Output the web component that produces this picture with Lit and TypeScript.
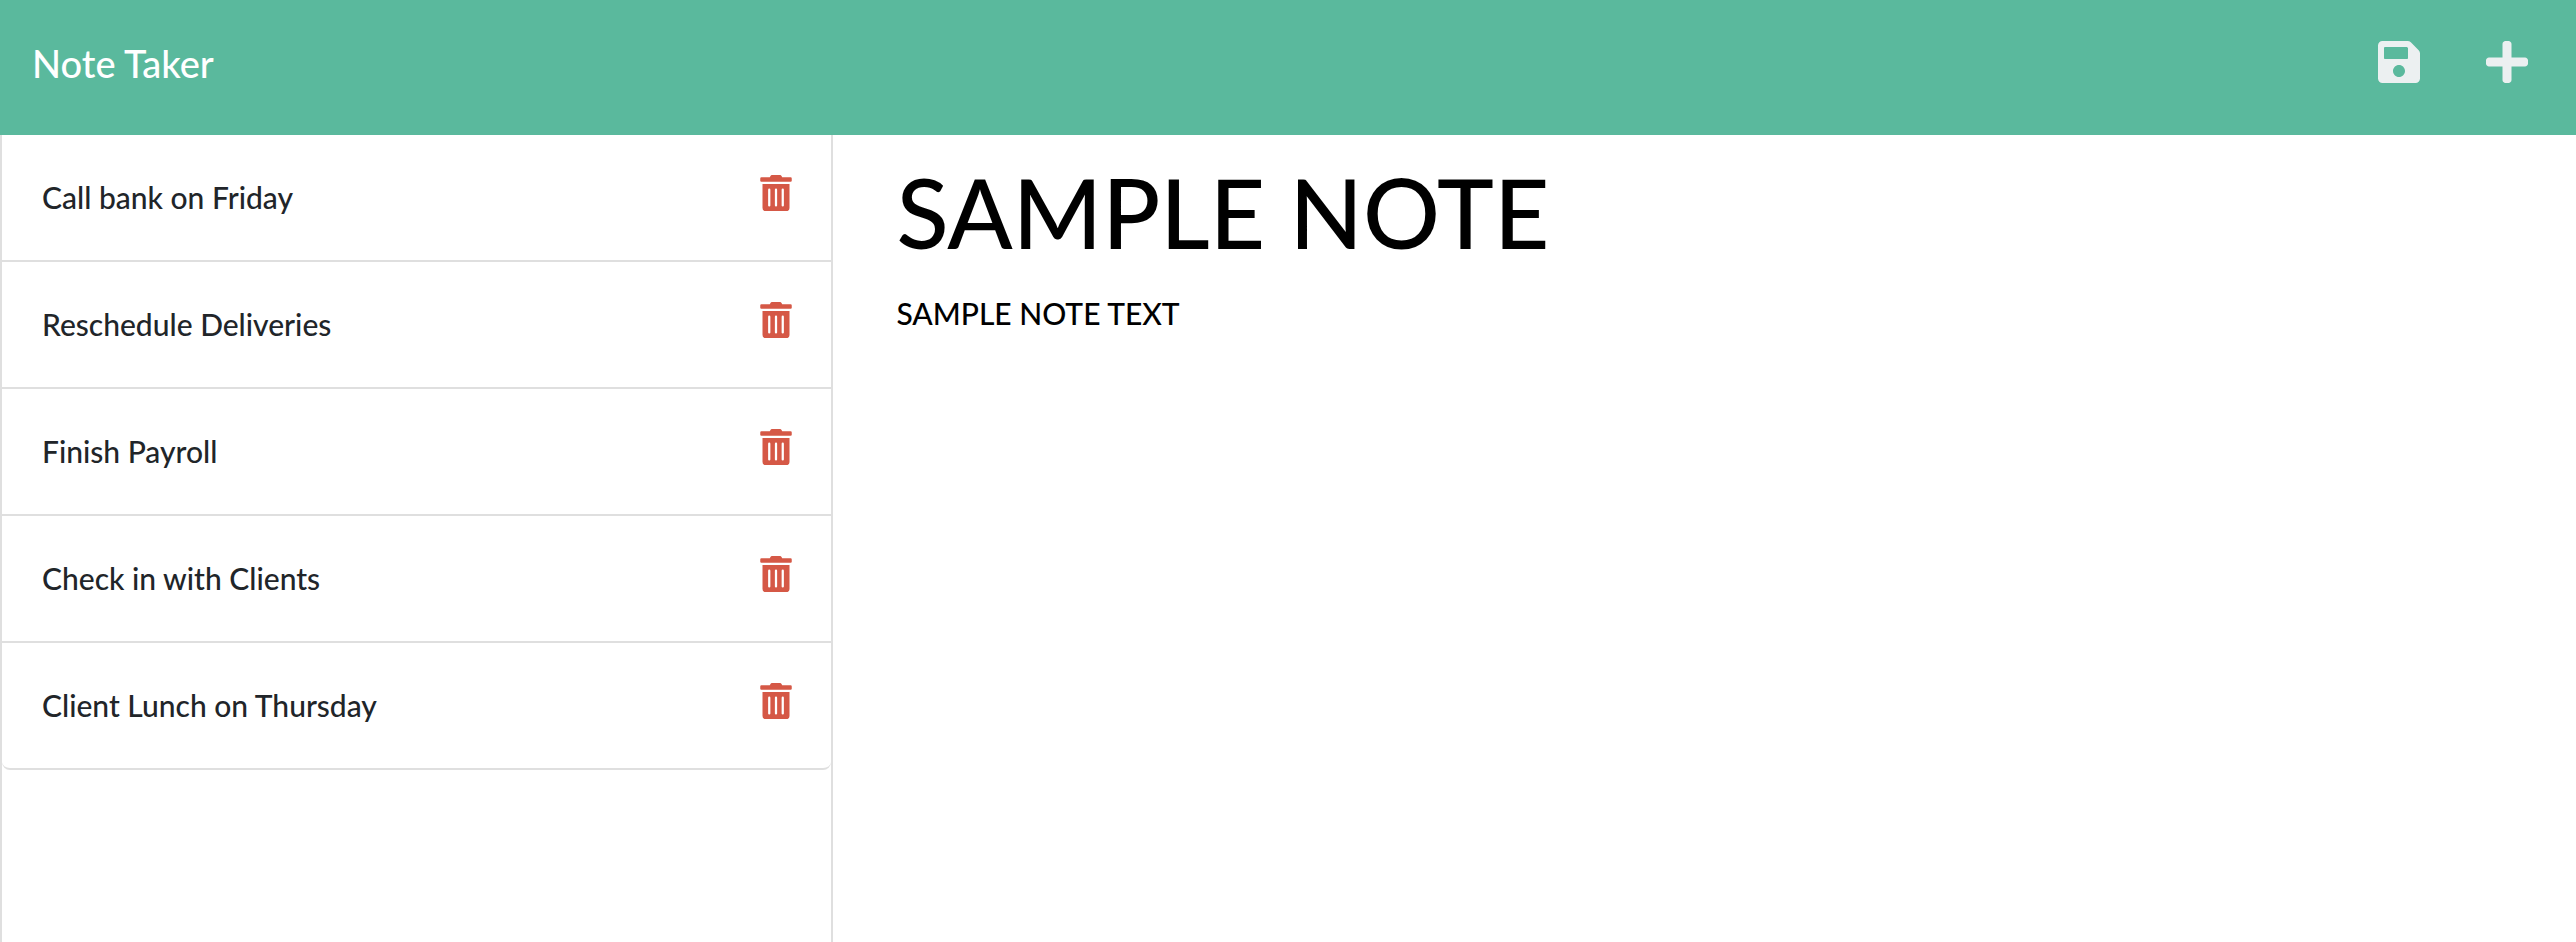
import { LitElement, html, css } from "lit";
import { customElement, state } from "lit/decorators.js";

interface Note {
  id: number;
  title: string;
}

@customElement("app-root")
export class AppRoot extends LitElement {
  static styles = css`
    :host {
      display: flex;
      flex-direction: column;
      min-height: 100vh;
      background: #fff;
      color: #212529;
      font-family: Lato, "Liberation Sans", sans-serif;
      font-size: 30px;
      font-weight: 500;
      line-height: 45px;
    }
    * {
      box-sizing: border-box;
    }
    button {
      display: block;
      padding: 0;
      border: 0;
      background: none;
      font: inherit;
      color: inherit;
      cursor: pointer;
    }
    svg {
      display: block;
      fill: currentColor;
    }
    .bar {
      display: flex;
      justify-content: space-between;
      align-items: flex-start;
      padding: 38px 48px 47px 32px;
      background: #5ab99d;
      color: #fff;
    }
    .brand {
      color: inherit;
      font-size: 38px;
      line-height: 50px;
      text-decoration: none;
    }
    .tools {
      display: flex;
      gap: 66px;
      color: #ecf0f1;
    }
    .tools svg {
      width: 42px;
      height: 48px;
    }
    .main {
      flex: 1;
      display: grid;
      grid-template-columns: 11fr 23fr;
    }
    .side {
      border: solid #dfdfdf;
      border-width: 0 2px;
    }
    .list {
      margin: 0;
      padding: 0;
      list-style: none;
      border-bottom: 2px solid #dfdfdf;
      border-radius: 0 0 8px 8px;
    }
    .item {
      display: flex;
      justify-content: space-between;
      align-items: flex-start;
      padding: 40px 39px 40px 40px;
    }
    .item + .item {
      border-top: 2px solid #dfdfdf;
    }
    .open {
      flex: 1;
      text-align: left;
    }
    .trash {
      color: #d55846;
    }
    .trash svg {
      width: 32px;
      height: 36px;
    }
    .note {
      display: flex;
      flex-direction: column;
      gap: 20px;
      padding: 16px 63px;
    }
    .field {
      display: block;
      width: 100%;
      padding: 0;
      border: 0;
      outline: 0;
      background: none;
      color: #000;
      font: inherit;
    }
    .title {
      height: 120px;
      font-size: 96px;
    }
    .body {
      flex: 1;
      resize: none;
    }
  `;

  @state() private notes: Note[] = [
    { id: 1, title: "Call bank on Friday" },
    { id: 2, title: "Reschedule Deliveries" },
    { id: 3, title: "Finish Payroll" },
    { id: 4, title: "Check in with Clients" },
    { id: 5, title: "Client Lunch on Thursday" },
  ];
  @state() private noteTitle = "SAMPLE NOTE";
  @state() private noteText = "SAMPLE NOTE TEXT";

  private remove(id: number) {
    this.notes = this.notes.filter((n) => n.id !== id);
  }

  private clear() {
    this.noteTitle = "";
    this.noteText = "";
  }

  private save() {
    if (!this.noteTitle) return;
    this.notes = [...this.notes, { id: Date.now(), title: this.noteTitle }];
    this.clear();
  }

  render() {
    return html`
      <header class="bar">
        <a class="brand" href="#">Note Taker</a>
        <div class="tools">
          <button type="button" aria-label="Save note" @click=${this.save}>
            <svg viewBox="0 0 448 512" aria-hidden="true">
              <path
                d="M433.941 129.941l-83.882-83.882A48 48 0 0 0 316.118 32H48C21.49 32 0 53.49 0 80v352c0 26.51 21.49 48 48 48h352c26.51 0 48-21.49 48-48V163.882a48 48 0 0 0-14.059-33.941zM224 416c-35.346 0-64-28.654-64-64 0-35.346 28.654-64 64-64s64 28.654 64 64c0 35.346-28.654 64-64 64zm96-304.52V212c0 6.627-5.373 12-12 12H76c-6.627 0-12-5.373-12-12V108c0-6.627 5.373-12 12-12h228.52c3.183 0 6.235 1.264 8.485 3.515l3.48 3.48A11.996 11.996 0 0 1 320 111.48z"
              ></path>
            </svg>
          </button>
          <button type="button" aria-label="New note" @click=${this.clear}>
            <svg viewBox="0 0 448 512" aria-hidden="true">
              <path
                d="M416 208H272V64c0-17.67-14.33-32-32-32h-32c-17.67 0-32 14.33-32 32v144H32c-17.67 0-32 14.33-32 32v32c0 17.67 14.33 32 32 32h144v144c0 17.67 14.33 32 32 32h32c17.67 0 32-14.33 32-32V304h144c17.67 0 32-14.33 32-32v-32c0-17.67-14.33-32-32-32z"
              ></path>
            </svg>
          </button>
        </div>
      </header>
      <main class="main">
        <nav class="side" aria-label="Notes">
          <ul class="list">
            ${this.notes.map(
              (n) => html`
                <li class="item">
                  <button type="button" class="open" @click=${() => (this.noteTitle = n.title)}>${n.title}</button>
                  <button type="button" class="trash" aria-label="Delete note" @click=${() => this.remove(n.id)}>
                    <svg viewBox="0 0 448 512" aria-hidden="true">
                      <path
                        d="M32 464a48 48 0 0 0 48 48h288a48 48 0 0 0 48-48V128H32zm272-256a16 16 0 0 1 32 0v224a16 16 0 0 1-32 0zm-96 0a16 16 0 0 1 32 0v224a16 16 0 0 1-32 0zm-96 0a16 16 0 0 1 32 0v224a16 16 0 0 1-32 0zM432 32H312l-9.4-18.7A24 24 0 0 0 281.1 0H166.8a23.72 23.72 0 0 0-21.4 13.3L136 32H16A16 16 0 0 0 0 48v32a16 16 0 0 0 16 16h416a16 16 0 0 0 16-16V48a16 16 0 0 0-16-16z"
                      ></path>
                    </svg>
                  </button>
                </li>
              `
            )}
          </ul>
        </nav>
        <section class="note">
          <input
            class="field title"
            type="text"
            aria-label="Note title"
            .value=${this.noteTitle}
            @input=${(e: Event) => (this.noteTitle = (e.target as HTMLInputElement).value)}
          />
          <textarea
            class="field body"
            aria-label="Note text"
            .value=${this.noteText}
            @input=${(e: Event) => (this.noteText = (e.target as HTMLTextAreaElement).value)}
          ></textarea>
        </section>
      </main>
    `;
  }
}
